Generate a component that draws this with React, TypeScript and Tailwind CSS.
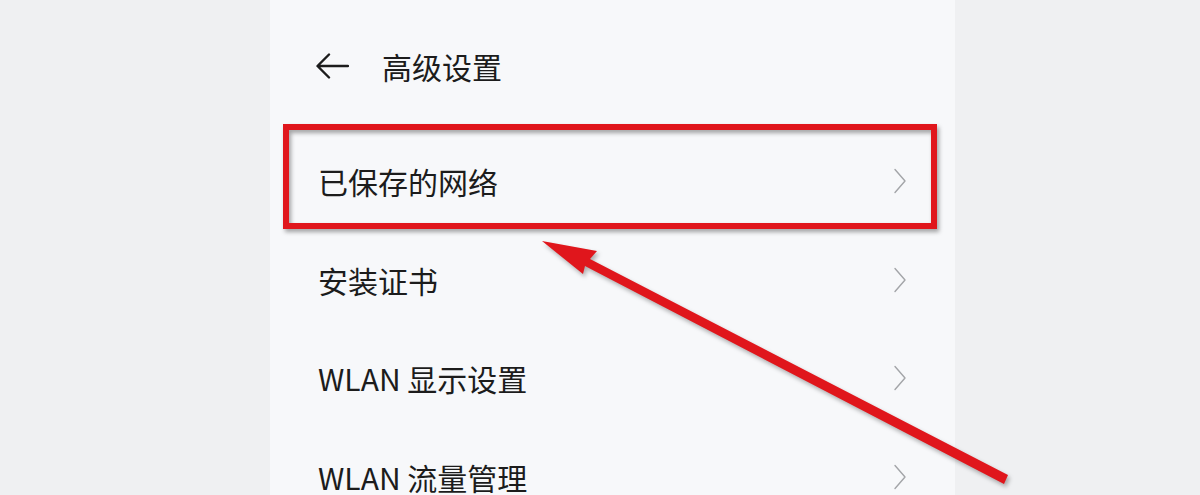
const rows = ['已保存的网络', '安装证书', 'WLAN 显示设置', 'WLAN 流量管理'];

function Chevron() {
    return (
        <svg width="14" height="26" viewBox="0 0 14 26" fill="none">
            <path d="M2 1.5 L12 13 L2 24.5" stroke="#a3a5a8" strokeWidth="1.4" strokeLinecap="round" strokeLinejoin="round" />
        </svg>
    );
}

function BackArrow() {
    return (
        <svg width="34" height="28" viewBox="0 0 34 28" fill="none">
            <path d="M33 14 H3 M14 2.5 L2.5 14 L14 25.5" stroke="#1c1c1c" strokeWidth="2.4" strokeLinecap="round" strokeLinejoin="round" />
        </svg>
    );
}

export default function App() {
    return (
        <div
            className="relative flex h-[495px] w-[1200px] overflow-hidden bg-[#eff0f2]"
            style={{ fontFamily: '"Noto Sans CJK SC", "Noto Sans", sans-serif' }}
        >
            <div className="w-[270px] shrink-0" />

            {/* settings panel */}
            <div className="flex w-[685px] shrink-0 flex-col bg-[#f7f8fa]">
                <div className="flex h-[132px] shrink-0 items-center pl-[45px]">
                    <BackArrow />
                    <span className="ml-[33px] text-[30px] leading-none text-[#1c1c1c]">高级设置</span>
                </div>
                {rows.map((r) => (
                    <div key={r} className="flex h-[98.5px] shrink-0 items-center justify-between pl-[48px] pr-[48px]">
                        <span className="text-[30px] leading-none text-[#1c1c1c]">{r}</span>
                        <Chevron />
                    </div>
                ))}
            </div>

            <div className="flex-1" />

            {/* annotation: red box */}
            <div className="absolute left-[283px] top-[124px] h-[105px] w-[654px] border-[6px] border-[#e0161c] drop-shadow-[2px_3px_2px_rgba(0,0,0,0.35)]" />

            {/* annotation: arrow */}
            <svg
                className="absolute left-0 top-0 drop-shadow-[2px_3px_2px_rgba(0,0,0,0.3)]"
                width="1200"
                height="495"
                viewBox="0 0 1200 495"
            >
                <polygon points="542,241 597,251 590,259 1008,475 1004,484 585,266 583,274" fill="#e0161c" />
            </svg>
        </div>
    );
}
